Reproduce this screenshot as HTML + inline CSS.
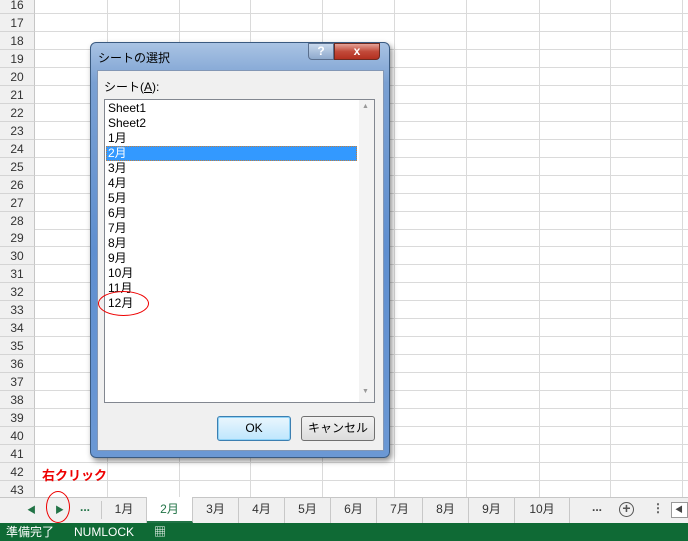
<!DOCTYPE html>
<html><head><meta charset="utf-8"><style>
*{margin:0;padding:0;box-sizing:border-box}
body{width:688px;height:541px;overflow:hidden;background:#fff;font-family:"Liberation Sans","Noto Sans CJK JP",sans-serif;position:relative;font-size:12px}
.abs{position:absolute}
.rh{position:absolute;left:0;width:35px;height:18px;background:#f0f0f0;border-bottom:1px solid #d4d4d4;border-right:1px solid #c6c6c6;color:#333;font-size:12px;text-align:center;line-height:18px}
.hl{position:absolute;left:35px;right:0;height:1px;background:#dadada}
.vl{position:absolute;top:0;height:497px;width:1px;background:#dadada}
.tab{position:absolute;top:497px;height:26px;line-height:24px;text-align:center;font-size:12px;color:#333;border-right:1px solid #c8c8c8}
.item{position:absolute;left:106px;width:251px;height:15px;line-height:15px;font-size:12px;color:#000;padding-left:2px}
</style></head><body>
<div id="grid"></div>
<script>
let g=document.getElementById('grid'),h='';
for(let i=0;i<28;i++){let t=-4+i*17.96;h+=`<div class="rh" style="top:${t}px">${16+i}</div><div class="hl" style="top:${t+17}px"></div>`;}
[107,179,250,322,394,466,539,610,682].forEach(x=>h+=`<div class="vl" style="left:${x}px"></div>`);
g.innerHTML=h;
</script>
<div class="abs" style="left:42px;top:465px;color:#e00;font-size:13px;font-weight:bold">右クリック</div>
<!-- tab bar -->
<div class="abs" style="left:0;top:497px;width:688px;height:26px;background:#f0f0f0;border-top:1px solid #c6c6c6"></div>
<div class="abs" style="left:27px;top:503px;color:#217346;font-size:9px">◀</div>
<div class="abs" style="left:55px;top:503px;color:#217346;font-size:9px">▶</div>
<div class="abs" style="left:46px;top:491px;width:24px;height:32px;border:1.5px solid #e00;border-radius:50%"></div>
<div class="abs" style="left:80px;top:500px;color:#217346;font-weight:bold">...</div>
<div class="abs" style="left:101px;top:501px;width:1px;height:18px;background:#c8c8c8"></div>
<div class="tab" style="left:102px;width:45px">1月</div>
<div class="tab" style="left:147px;width:46px;background:#fff;color:#217346;border-bottom:2px solid #217346">2月</div>
<div class="tab" style="left:193px;width:46px">3月</div>
<div class="tab" style="left:239px;width:46px">4月</div>
<div class="tab" style="left:285px;width:46px">5月</div>
<div class="tab" style="left:331px;width:46px">6月</div>
<div class="tab" style="left:377px;width:46px">7月</div>
<div class="tab" style="left:423px;width:46px">8月</div>
<div class="tab" style="left:469px;width:46px">9月</div>
<div class="tab" style="left:515px;width:55px">10月</div>
<div class="abs" style="left:592px;top:500px;color:#444;font-weight:bold">...</div>
<div class="abs" style="left:619px;top:502px;width:15px;height:15px;border:1.5px solid #555;border-radius:50%;text-align:center;line-height:11px;font-size:14px;font-weight:bold;color:#555">+</div>
<div class="abs" style="left:652px;top:501px;color:#555;font-weight:bold">⋮</div>
<div class="abs" style="left:671px;top:502px;width:17px;height:16px;border:1px solid #999;background:#fff;font-size:8px;line-height:14px;padding-left:3px;color:#444">◀</div>
<!-- status -->
<div class="abs" style="left:0;top:523px;width:688px;height:18px;background:#0f6a35;color:#fff;font-size:12px;line-height:18px;padding-left:6px">準備完了&nbsp;&nbsp;&nbsp;&nbsp;&nbsp;&nbsp;NUMLOCK&nbsp;&nbsp;&nbsp;&nbsp;&nbsp;&nbsp;▦</div>
<!-- dialog -->
<div class="abs" style="left:90px;top:42px;width:300px;height:416px;border-radius:6px;border:1px solid #3a5a80;background:linear-gradient(180deg,#a9c3e3 0,#7aa0d2 40px,#5f8fd0 50%,#6b98d4 100%);box-shadow:2px 3px 6px rgba(0,0,0,.45)"></div>
<div class="abs" style="left:98px;top:49px;font-size:12px;color:#000">シートの選択</div>
<div class="abs" style="left:308px;top:43px;width:26px;height:17px;background:linear-gradient(#c8d8ec,#8ea9cc);border:1px solid #5a6f8e;border-radius:0 0 0 4px;color:#fff;font-weight:bold;text-align:center;line-height:15px;font-size:12px">?</div>
<div class="abs" style="left:334px;top:43px;width:46px;height:17px;background:linear-gradient(#e5a196,#c24a3a 50%,#b33020);border:1px solid #6e2a20;border-radius:0 0 4px 0;color:#fff;font-weight:bold;text-align:center;line-height:15px;font-size:12px">x</div>
<div class="abs" style="left:97px;top:70px;width:287px;height:381px;background:#f0f0f0;border:1px solid #8397b5"></div>
<div class="abs" style="left:104px;top:78px;font-size:12px">シート(<u>A</u>):</div>
<div class="abs" style="left:104px;top:99px;width:271px;height:304px;background:#fff;border:1px solid #828790"></div>
<div class="abs" style="left:359px;top:100px;width:15px;height:302px;background:#f3f3f3"></div>
<div class="abs" style="left:362px;top:103px;font-size:7px;color:#999">▲</div>
<div class="abs" style="left:362px;top:388px;font-size:7px;color:#999">▼</div>
<div class="abs" style="left:106px;top:146px;width:251px;height:15px;background:#3399ff;border:1px dotted #c08040"></div>
<div class="item" style="top:101px">Sheet1</div>
<div class="item" style="top:116px">Sheet2</div>
<div class="item" style="top:131px">1月</div>
<div class="item" style="top:146px;color:#fff">2月</div>
<div class="item" style="top:161px">3月</div>
<div class="item" style="top:176px">4月</div>
<div class="item" style="top:191px">5月</div>
<div class="item" style="top:206px">6月</div>
<div class="item" style="top:221px">7月</div>
<div class="item" style="top:236px">8月</div>
<div class="item" style="top:251px">9月</div>
<div class="item" style="top:266px">10月</div>
<div class="item" style="top:281px">11月</div>
<div class="item" style="top:296px">12月</div>
<div class="abs" style="left:98px;top:291px;width:51px;height:25px;border:1.5px solid #e00;border-radius:50%"></div>
<div class="abs" style="left:217px;top:416px;width:74px;height:25px;border:1px solid #3c7fb1;border-radius:3px;background:linear-gradient(#eaf6fd,#bee6fd);box-shadow:inset 0 0 0 1px #8fd3f7;text-align:center;line-height:23px">OK</div>
<div class="abs" style="left:301px;top:416px;width:74px;height:25px;border:1px solid #707070;border-radius:3px;background:linear-gradient(#f2f2f2,#dcdcdc);text-align:center;line-height:23px">キャンセル</div>
</body></html>
